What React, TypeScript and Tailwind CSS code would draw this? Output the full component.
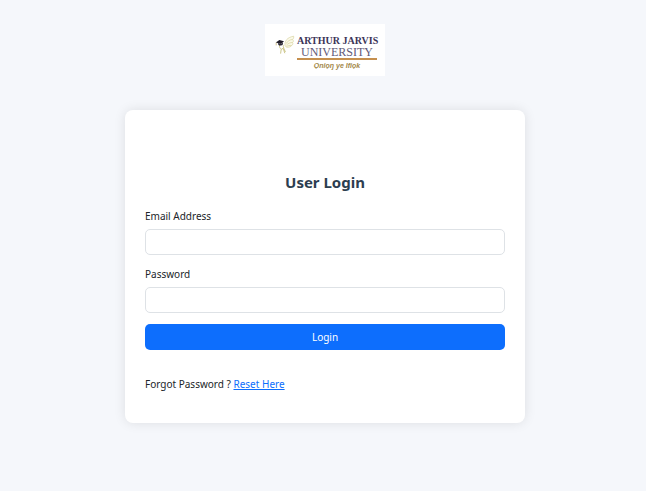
import type { InputHTMLAttributes } from 'react';

interface FieldProps extends InputHTMLAttributes<HTMLInputElement> {
  id: string;
  label: string;
}

function Field({ id, label, ...props }: FieldProps) {
  return (
    <div className="mb-[11px]">
      <label htmlFor={id} className="mb-[5px] block leading-4">
        {label}
      </label>
      <input
        id={id}
        className="block h-[26px] w-full rounded-[5px] border border-[#dee2e6] bg-white px-2 outline-none focus:border-[#86b7fe]"
        {...props}
      />
    </div>
  );
}

function BirdMark() {
  return (
    <svg viewBox="0 0 20 20" className="h-5 w-5 shrink-0" fill="none" aria-hidden="true">
      {/* wing */}
      <path d="M10 10.5C9.6 6 12 2.5 18.6 1.2C18.9 2.6 18.5 3.6 17.6 4.4C18.6 5.5 18.6 6.6 17.6 7.4C18.2 8.7 17.8 9.8 16.6 10.5C16 12 13.6 12.4 11.4 12.2Z" fill="#fbfaea" stroke="#d8d4a0" strokeWidth=".7" />
      <path d="M11.2 8.6C12.6 6 14.8 4.8 17.6 4.4M11.4 10.2C13 8.4 15 7.6 17.6 7.4M11.6 11.4C13 10.6 14.5 10.4 16.6 10.5" stroke="#d8d39d" strokeWidth=".7" />
      {/* body and legs */}
      <path d="M4.6 9.8C4.1 12.3 5.2 13.3 6.2 14.3L5.6 18.6M8.3 10.2C8 12.2 9.2 14 10.4 17M6.2 14.3L8.2 13.3L9.8 18.2" stroke="#c6c07e" strokeWidth=".9" />
      {/* cap */}
      <path d="M.8 7.4L4.4 5L9 6.2L6 9Z" fill="#1f1c28" />
      <path d="M2.9 8L3.4 10C4.9 11 7 10.6 7.8 9.4L8 7.2L6 9Z" fill="#2f2b38" />
      <path d="M1.2 7.6V10.4" stroke="#b7a04c" strokeWidth=".6" />
    </svg>
  );
}

function Logo() {
  return (
    <div className="flex h-[52px] w-[120px] bg-white pl-2.5 pt-[11px]">
      <BirdMark />
      <div className="ml-0.5 w-20 shrink-0 whitespace-nowrap text-center font-['Liberation_Serif',serif]">
        <div className="text-[10px] font-bold leading-[12px] text-[#3c3558]">ARTHUR JARVIS</div>
        <div className="text-[12px] leading-[11px] text-[#5f5a78]">UNIVERSITY</div>
        <div className="h-0.5 bg-[#c58f4e]" />
        <div className="font-['Liberation_Sans',sans-serif] text-[7px] font-bold italic leading-[11px] text-[#a3884a]">
          Ọniọŋ ye Ifiọk
        </div>
      </div>
    </div>
  );
}

export default function App() {
  return (
    <div className="flex min-h-screen flex-col items-center bg-[#f5f7fb] pb-8 pl-1 pt-6 font-['Noto_Sans',sans-serif] text-[10px] text-[#212529]">
      <Logo />
      <main className="mt-[34px] w-full max-w-[400px] rounded-lg bg-white px-5 pb-[31px] pt-[60px] shadow-[0_0_12px_rgba(0,0,0,0.1)]">
        <h1 className="mb-3.5 text-center text-[15px] font-bold leading-6 text-[#2c3e50]">User Login</h1>
        <form onSubmit={(e) => e.preventDefault()}>
          <Field id="email" label="Email Address" type="email" name="email" />
          <Field id="password" label="Password" type="password" name="password" />
          <button
            type="submit"
            className="block h-[26px] w-full cursor-pointer rounded-[5px] bg-[#0d6efd] text-white hover:bg-[#0b5ed7]"
          >
            Login
          </button>
        </form>
        <p className="mt-[26px] leading-4">
          Forgot Password ?{' '}
          <a href="#reset" className="text-[#0d6efd] underline">
            Reset Here
          </a>
        </p>
      </main>
    </div>
  );
}
